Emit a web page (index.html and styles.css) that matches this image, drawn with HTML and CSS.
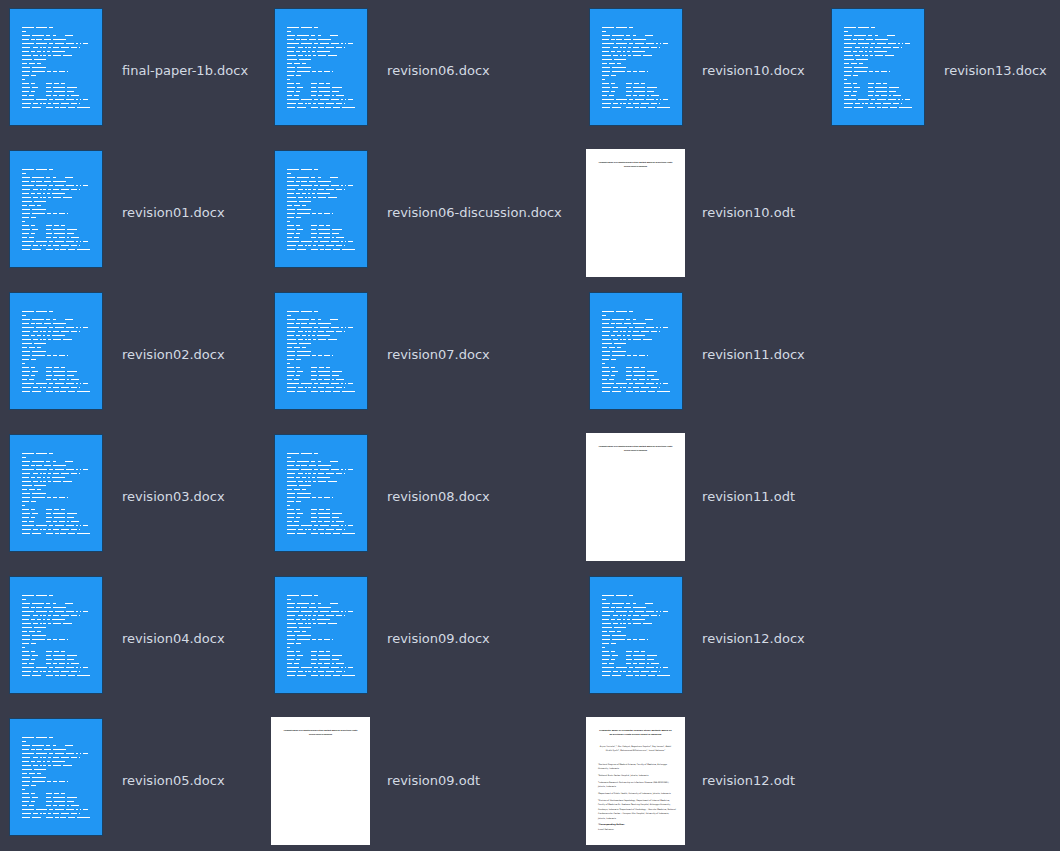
FILE: index.html
```html
<!DOCTYPE html>
<html lang="en">
<head>
<meta charset="utf-8">
<title>Files</title>
<link rel="stylesheet" href="styles.css">
<script src="files.js" defer></script>
</head>
<body>
<main class="files" id="files"></main>
</body>
</html>
```

FILE: styles.css
```css
body {
  margin: 0;
  background: #383b4a;
  color: #d3dae3;
  font: 13px/16px "DejaVu Sans", sans-serif;
}

.files {
  display: grid;
  grid-auto-flow: column;
  grid-template-rows: repeat(6, 128px);
  grid-template-columns: minmax(max-content, 242px) minmax(max-content, 292px) minmax(max-content, 219px) max-content;
  gap: 14px 23px;
  padding: 7px 0 6px 6px;
}

.file {
  display: flex;
  align-items: center;
  gap: 16px;
}

.thumb {
  display: flex;
  justify-content: center;
  width: 100px;
}

.docx {
  box-sizing: border-box;
  width: 94px;
  height: 118px;
  margin-bottom: 8px;
  border: 1px solid #1c4163;
  background: #2196f3;
}

.lines {
  fill: none;
  stroke: #fff;
  stroke-width: 1px;
}

.odt {
  width: 99px;
  height: 128px;
  margin-right: 1px;
  background: #fff;
}

.page-title,
.page-text {
  font-family: "DejaVu Sans", sans-serif;
  font-size: 16px;
  fill: #111;
}

.page-title {
  font-family: "Liberation Sans", sans-serif;
  font-size: 18px;
  font-weight: 700;
  fill: #000;
}

.small {
  font-size: 14px;
}

.centered {
  text-anchor: middle;
}
```

FILE: files.js
```js
const names = [
  "final-paper-1b.docx", "revision01.docx", "revision02.docx",
  "revision03.docx", "revision04.docx", "revision05.docx",
  "revision06.docx", "revision06-discussion.docx", "revision07.docx",
  "revision08.docx", "revision09.docx", "revision09.odt",
  "revision10.docx", "revision10.odt", "revision11.docx",
  "revision11.odt", "revision12.docx", "revision12.odt",
  "revision13.docx"
];

const docx = `<svg class="docx" viewBox="0 0 92 116" aria-hidden="true"><path class="lines" d="M12 18.5h12m2 0h11m2 0h4
M12 22.5h4
M12 26.5h8m2 0h12m2 0h4m3 0h3m9 0h8
M12 30.5h7m2 0h4m1 0h6m2 0h7m2 0h13
M12 34.5h12m2 0h11m2 0h4m2 0h9m2 0h8m2 0h2m2 0h1m2 0h5
M12 38.5h8m3 0h5m2 0h2m1 0h3m2 0h3m2 0h6m2 0h8m2 0h6m2 0h1
M12 42.5h7m2 0h4m2 0h4m2 0h2m2 0h3m2 0h13
M12 46.5h9m2 0h5m2 0h2m1 0h3m2 0h3m2 0h8m2 0h9
M12 50.5h10m2 0h12
M12 54.5h5m2 0h6m2 0h4
M12 58.5h8m2 0h14
M12 62.5h8m2 0h13m2 0h4m2 0h4m2 0h6m2 0h1
M12 66.5h7m2 0h5
M12 70.5h3
M12 74.5h7m2 0h4m11 0h6m2 0h5m2 0h4
M12 78.5h8m2 0h6m8 0h5m2 0h12m2 0h10
M12 82.5h7m2 0h4m11 0h6m2 0h11m2 0h7
M12 86.5h5m2 0h5m12 0h5m2 0h4m2 0h6m2 0h2m2 0h8
M12 90.5h12m2 0h11m2 0h4m2 0h9m2 0h8m2 0h2m2 0h1m2 0h5
M12 94.5h9m2 0h5m2 0h2m1 0h3m2 0h3m2 0h6m2 0h8m2 0h6m2 0h1
M12 98.5h8m2 0h9m5 0h7m2 0h4m1 0h6m2 0h7m2 0h13"/></svg>`;

const titlePage = `
  <text class="page-title small centered" x="396" y="110">Prognostic Model of In-hospital Ischemic Stroke Mortality Based on an Electronic Health</text>
  <text class="page-title small centered" x="396" y="144">Record Cohort in Indonesia</text>`;

const fullPage = `
  <text class="page-title centered" x="396" y="110">Prognostic Model of In-hospital Ischemic Stroke Mortality Based on</text>
  <text class="page-title centered" x="396" y="144">an Electronic Health Record Cohort in Indonesia</text>
  <g class="page-text centered">
    <text x="396" y="236">Aryan Yuniarto¹,², Nur Hidayat, Bagaskara Saputra³, Roy Larson⁴, Abdul</text>
    <text x="396" y="272">Khalik Syafri⁵, Mohammad Miftahussurur⁶, Ismail Setiawan⁷</text>
  </g>
  <g class="page-text">
    <text x="96" y="380">¹Doctoral Program of Medical Science, Faculty of Medicine, Airlangga</text>
    <text x="96" y="416">University, Indonesia</text>
    <text x="96" y="470">²National Brain Center Hospital, Jakarta, Indonesia</text>
    <text x="96" y="524">³Indonesia Research Partnership on Infectious Disease (INA-RESPOND),</text>
    <text x="96" y="560">Jakarta, Indonesia</text>
    <text x="96" y="614">⁴Department of Public Health, University of Indonesia, Jakarta, Indonesia</text>
    <text x="96" y="668">⁵Division of Gastroentero-Hepatology, Department of Internal Medicine,</text>
    <text x="96" y="704">Faculty of Medicine-Dr. Soetomo Teaching Hospital, Airlangga University,</text>
    <text x="96" y="740">Surabaya, Indonesia ⁶Department of Cardiology – Vascular Medicine, National</text>
    <text x="96" y="776">Cardiovascular Center – Harapan Kita Hospital, University of Indonesia,</text>
    <text x="96" y="812">Jakarta, Indonesia</text>
    <text x="96" y="866" font-weight="700">*Corresponding Author:</text>
    <text x="96" y="902">Ismail Setiawan</text>
  </g>`;

function thumbnail(name) {
  if (name.endsWith(".docx")) return docx;
  const page = name === "revision12.odt" ? fullPage : titlePage;
  return `<svg class="odt" viewBox="0 0 792 1024" aria-hidden="true">${page}</svg>`;
}

document.getElementById("files").innerHTML = names.map(name =>
  `<div class="file"><span class="thumb">${thumbnail(name)}</span><span class="name">${name}</span></div>`
).join("");
```
